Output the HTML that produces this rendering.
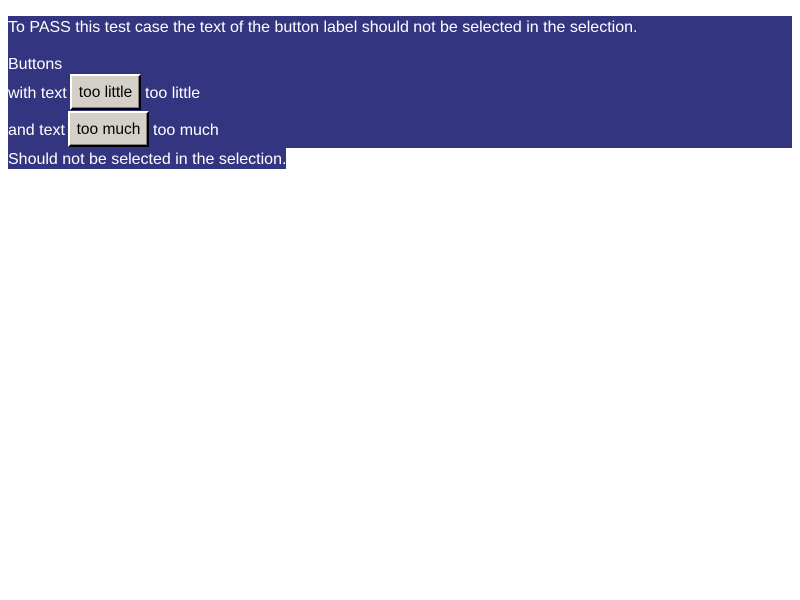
<!DOCTYPE html>
<html><head><style>
body{margin:0;background:#fff;font-family:"Liberation Sans",sans-serif;font-size:16px;color:#fff;}
.a{position:absolute;white-space:nowrap;line-height:19px;}
.bg{position:absolute;background:#333580;}
.btn{position:absolute;background:#d4d0c8;color:#000;box-sizing:border-box;border-top:2px solid #fff;border-left:2px solid #fff;border-right:2px solid #000;border-bottom:2px solid #000;box-shadow:inset -1px -1px 0 #808080;text-align:center;line-height:34px;font-size:15.5px;}
</style></head><body>
<div class="bg" style="left:8px;top:16px;width:784px;height:132px"></div>
<div class="bg" style="left:8px;top:148px;width:278px;height:21px"></div>
<div class="a" style="left:8px;top:18px">To PASS this test case the text of the button label should not be selected in the selection.</div>
<div class="a" style="left:8px;top:55px">Buttons</div>
<div class="a" style="left:8px;top:84px">with text</div>
<div class="btn" style="left:70px;top:74px;width:71px;height:36px">too little</div>
<div class="a" style="left:145px;top:84px">too little</div>
<div class="a" style="left:8px;top:121px">and text</div>
<div class="btn" style="left:68px;top:111px;width:81px;height:36px">too much</div>
<div class="a" style="left:153px;top:121px">too much</div>
<div class="a" style="left:8px;top:150px">Should not be selected in the selection.</div>
</body></html>
